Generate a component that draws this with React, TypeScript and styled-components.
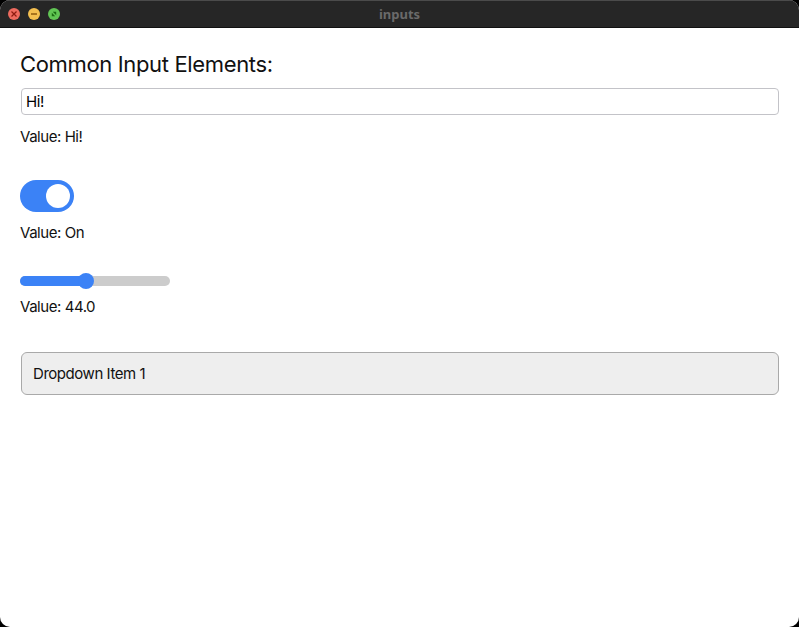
import React, { useState } from "react";
import styled, { createGlobalStyle } from "styled-components";

const Global = createGlobalStyle`
  html, body { margin: 0; padding: 0; background: #000; }
  body { font-family: Inter, "Noto Sans", "Liberation Sans", sans-serif; }
  * { box-sizing: border-box; }
`;

const Window = styled.div`
  width: 799px;
  height: 627px;
  display: flex;
  flex-direction: column;
  border-radius: 10px;
  overflow: hidden;
  background: #fff;
`;

const TitleBar = styled.div`
  height: 28px;
  flex: none;
  background: #262626;
  border-top: 1px solid #4b4b4b;
  border-bottom: 1px solid #111;
  position: relative;
  display: flex;
  align-items: center;
  justify-content: center;
`;

const Lights = styled.div`
  position: absolute;
  left: 8px;
  top: 7px;
  display: flex;
  gap: 8px;
`;

const Light = styled.div<{ $c: string }>`
  width: 12px;
  height: 12px;
  border-radius: 50%;
  background: ${(p) => p.$c};
  display: flex;
  align-items: center;
  justify-content: center;
`;

const Title = styled.div`
  color: #6a6a6a;
  font-size: 13px;
  font-weight: 700;
  font-family: "Noto Sans", Inter, sans-serif;
`;

const Content = styled.div`
  flex: 1;
  padding: 22px 20px 0 20px;
  display: flex;
  flex-direction: column;
  color: #111;
`;

const Heading = styled.h1`
  margin: 0;
  font-size: 22px;
  font-weight: 400;
  line-height: 28px;
  letter-spacing: -0.35px;
`;

const TextInput = styled.input`
  margin: 10px 0 0 1px;
  width: 758px;
  height: 27px;
  border: 1px solid #c3c3c8;
  border-radius: 4px;
  padding: 0 4px;
  font-family: inherit;
  font-size: 15px;
  letter-spacing: -0.4px;
  color: #000;
  outline: none;
  caret-color: #000;
`;

const ValueText = styled.div<{ $mt: number }>`
  margin-top: ${(p) => p.$mt}px;
  font-size: 15px;
  letter-spacing: -0.45px;
  line-height: 20px;
`;

const Toggle = styled.button<{ $on: boolean }>`
  margin-top: 33px;
  width: 54px;
  height: 32px;
  border-radius: 16px;
  border: none;
  background: ${(p) => (p.$on ? "#3b82f6" : "#ccc")};
  display: flex;
  align-items: center;
  justify-content: ${(p) => (p.$on ? "flex-end" : "flex-start")};
  padding: 0 4px;
  cursor: pointer;
`;

const Knob = styled.span`
  width: 24px;
  height: 24px;
  border-radius: 50%;
  background: #fff;
`;

const SliderTrack = styled.div`
  margin-top: 33px;
  width: 150px;
  height: 10px;
  border-radius: 5px;
  background: #cccccc;
  position: relative;
`;

const SliderFill = styled.div`
  height: 100%;
  border-radius: 5px;
  background: #3b82f6;
`;

const Thumb = styled.div`
  position: absolute;
  top: 50%;
  width: 16px;
  height: 16px;
  border-radius: 50%;
  background: #3b82f6;
  transform: translate(-50%, -50%);
`;

const Dropdown = styled.div`
  margin: 35px 0 0 1px;
  width: 758px;
  height: 43px;
  border: 1px solid #a9a9a9;
  border-radius: 6px;
  background: #eeeeee;
  display: flex;
  align-items: center;
  padding-left: 11px;
  font-size: 15px;
  letter-spacing: -0.45px;
`;

export default function App() {
  const [text, setText] = useState("Hi!");
  const [on, setOn] = useState(true);
  const value = 44;
  const pct = value / 100;
  return (
    <>
      <Global />
      <Window>
        <TitleBar>
          <Lights>
            <Light $c="#ed6a5e">
              <svg width="8" height="8" viewBox="0 0 8 8">
                <path d="M1.5 1.5 L6.5 6.5 M6.5 1.5 L1.5 6.5" stroke="#8c1a10" strokeWidth="1.2" />
              </svg>
            </Light>
            <Light $c="#f4bf4f">
              <svg width="8" height="8" viewBox="0 0 8 8">
                <path d="M1 4 L7 4" stroke="#8f5a0c" strokeWidth="1.6" />
              </svg>
            </Light>
            <Light $c="#61c554">
              <svg width="8" height="8" viewBox="0 0 8 8">
                <path d="M1.8 6.2 L1.8 2.8 L5.2 6.2 Z M6.2 1.8 L6.2 5.2 L2.8 1.8 Z" fill="#1a6b12" />
              </svg>
            </Light>
          </Lights>
          <Title>inputs</Title>
        </TitleBar>
        <Content>
          <Heading>Common Input Elements:</Heading>
          <TextInput value={text} onChange={(e) => setText(e.target.value)} autoFocus />
          <ValueText $mt={12}>Value: {text}</ValueText>
          <Toggle $on={on} onClick={() => setOn(!on)}>
            <Knob />
          </Toggle>
          <ValueText $mt={11}>Value: {on ? "On" : "Off"}</ValueText>
          <SliderTrack>
            <SliderFill style={{ width: `${pct * 100}%` }} />
            <Thumb style={{ left: `${pct * 100}%` }} />
          </SliderTrack>
          <ValueText $mt={11}>Value: {value.toFixed(1)}</ValueText>
          <Dropdown>Dropdown Item 1</Dropdown>
        </Content>
      </Window>
    </>
  );
}
